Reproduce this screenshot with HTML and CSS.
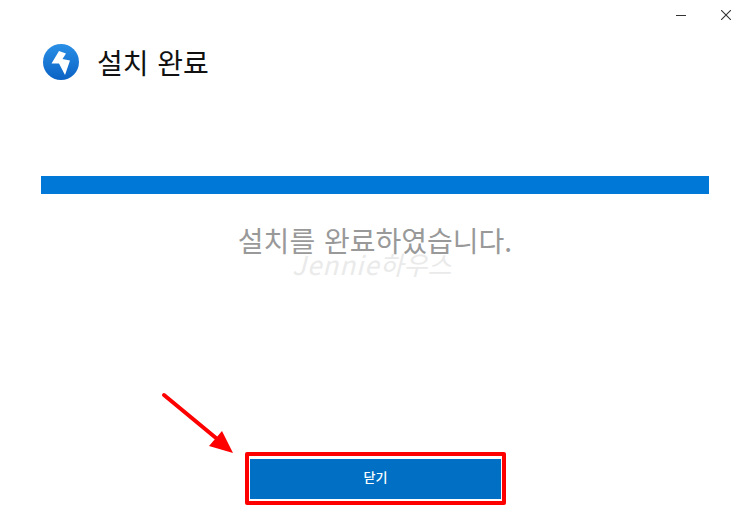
FILE: index.html
```html
<!DOCTYPE html>
<html lang="ko">
<head>
  <meta charset="UTF-8">
  <title>설치 완료</title>
  <link rel="stylesheet" href="styles.css">
</head>
<body>
  <div class="window">
    <div class="window-controls">
      <svg class="control" width="10" height="10" viewBox="0 0 10 10">
        <path d="M0 5.500H10" stroke="#333" stroke-width="1"/>
      </svg>
      <svg class="control" width="10" height="10" viewBox="0 0 10 10">
        <path d="M0 0L10 10M10 0L0 10" stroke="#333" stroke-width="1.100"/>
      </svg>
    </div>

    <div class="header">
      <svg class="logo" width="36" height="36" viewBox="0 0 36 36">
        <defs>
          <linearGradient id="logoFill" x1="0" y1="0" x2="0" y2="1">
            <stop offset="0" stop-color="#2a8fe6"/>
            <stop offset="1" stop-color="#0a62c4"/>
          </linearGradient>
        </defs>
        <circle cx="18" cy="18" r="18" fill="url(#logoFill)"/>
        <path d="M16 7L8.500 19.500L16 19.500L22 31L27 16.500L19.500 15L23 9.500Z" fill="#fff"/>
      </svg>
      <h1>설치 완료</h1>
    </div>

    <div class="progress"></div>
    <p class="message">설치를 완료하였습니다.</p>
    <div class="watermark"><i class="watermark-name">Jennie</i><i>하우스</i></div>

    <div class="footer">
      <div class="highlight">
        <button class="close-button">닫기</button>
      </div>
    </div>

    <svg class="arrow" width="90" height="80" viewBox="0 0 90 80">
      <path d="M3 3L55 46" stroke="#f00" stroke-width="4" stroke-linecap="round"/>
      <path d="M48 54L72 61L61 39Z" fill="#f00"/>
    </svg>
  </div>
</body>
</html>
```

FILE: styles.css
```css
* {
  box-sizing: border-box;
}

body {
  margin: 0;
  background: #fff;
  font-family: "Noto Sans CJK KR", "Noto Sans", sans-serif;
}

.window {
  position: relative;
  width: 750px;
  height: 530px;
  padding: 0 41px;
  display: flex;
  flex-direction: column;
  overflow: hidden;
}

.window-controls {
  display: flex;
  justify-content: flex-end;
  gap: 35px;
  height: 42px;
  padding-top: 10px;
  margin-right: -22px;
}

.header {
  display: flex;
  align-items: center;
  gap: 18px;
  height: 40px;
  padding-left: 2px;
}

.logo {
  flex: none;
}

h1 {
  margin: 0;
  font-size: 28px;
  font-weight: 400;
  line-height: 40px;
  word-spacing: 1px;
  color: #111;
}

.progress {
  height: 18px;
  margin-top: 94px;
  background: #0078d7;
}

.message {
  margin: 31px 0 0;
  font-size: 28px;
  font-weight: 400;
  line-height: 30px;
  word-spacing: 1px;
  text-align: center;
  color: #999;
}

.watermark {
  position: absolute;
  left: 292px;
  top: 254px;
  font-size: 26px;
  line-height: 20px;
  color: #eaeaea;
}

.watermark-name {
  letter-spacing: 1px;
}

.footer {
  display: flex;
  justify-content: center;
  margin-top: 197px;
}

.highlight {
  width: 261px;
  height: 53px;
  padding: 3px 1px 2px;
  border: 4px solid #f00;
  border-radius: 2px;
  margin-left: 1px;
}

.close-button {
  display: block;
  width: 100%;
  height: 100%;
  padding: 0 0 5px;
  border: none;
  background: #006fc4;
  color: #fff;
  font-family: inherit;
  font-size: 13px;
  font-weight: 500;
}

.arrow {
  position: absolute;
  left: 161px;
  top: 392px;
}
```
